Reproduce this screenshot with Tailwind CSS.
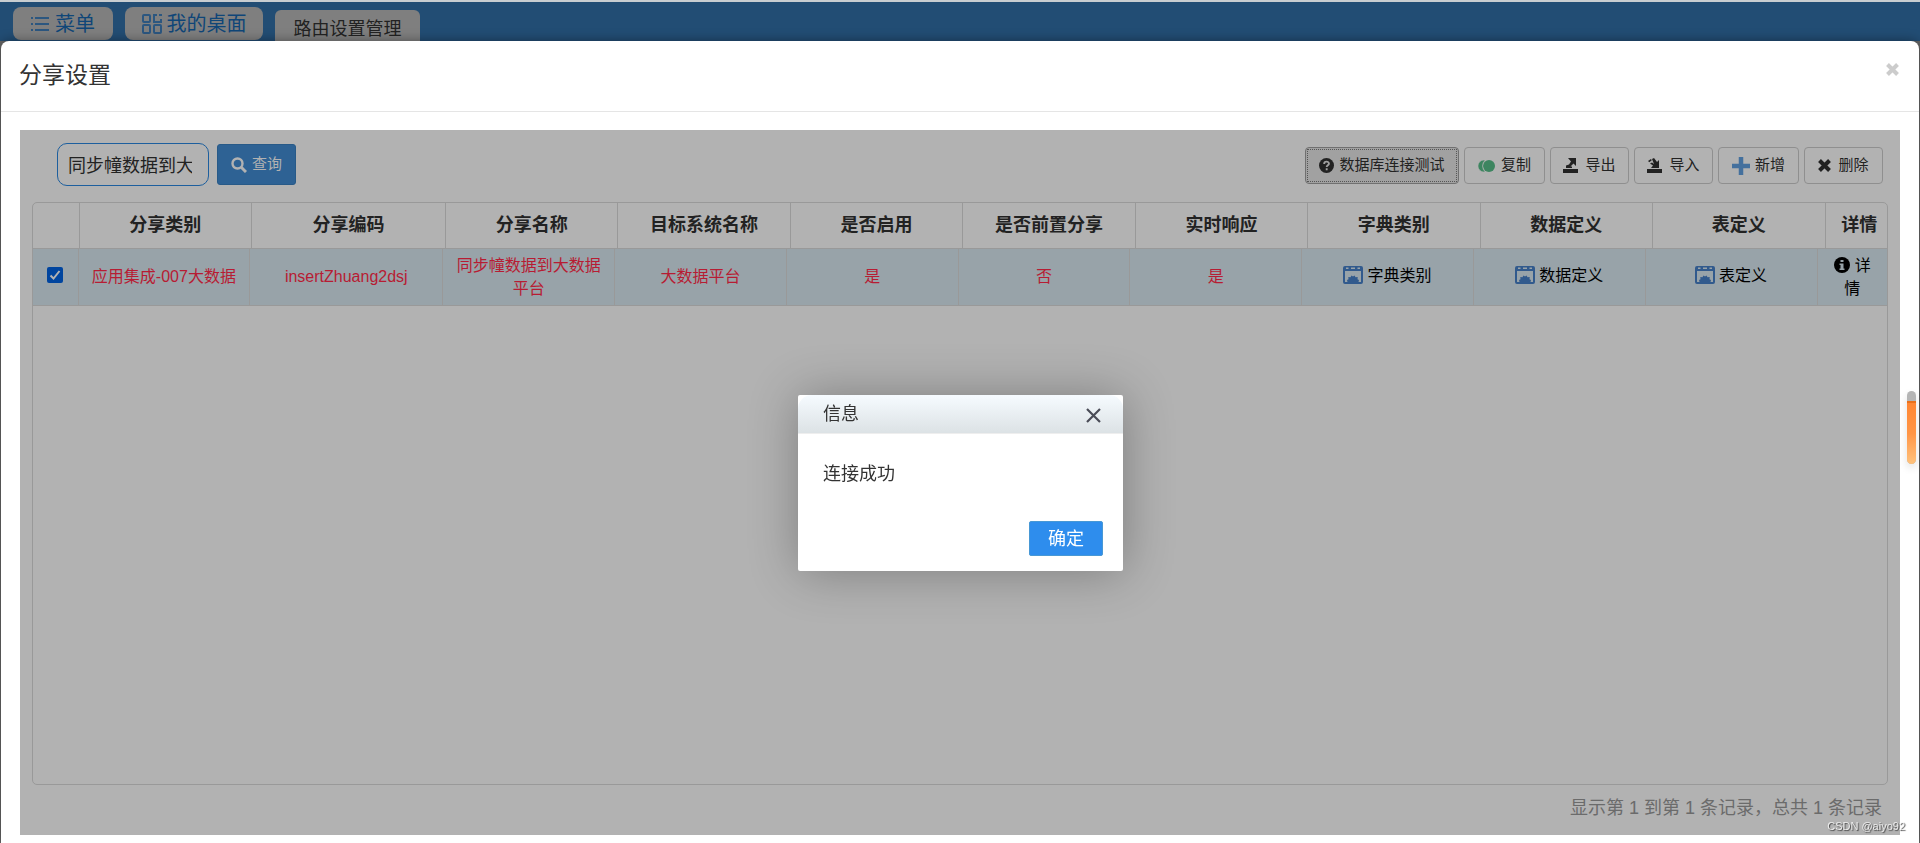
<!DOCTYPE html>
<html lang="zh-CN">
<head>
<meta charset="utf-8">
<title>分享设置</title>
<script src="https://cdn.jsdelivr.net/npm/@tailwindcss/browser@4"></script>
</head>
<body class="min-h-screen flex flex-col bg-[#666] font-['Liberation_Sans','Noto_Sans_CJK_SC',sans-serif] text-[18px] text-[#222]">
<svg class="hidden">
  <symbol id="win" viewBox="0 0 20 18"><path fill-rule="evenodd" d="M2 0h16a2 2 0 0 1 2 2v14a2 2 0 0 1-2 2H2a2 2 0 0 1-2-2V2a2 2 0 0 1 2-2zM2 5v11h2.500l-.5-2 1.500-.8-.2-2.200 2.200.2 1-1.700 1.500 1 1.500-1 1 1.700 2.200-.2-.2 2.200 1.500.8-.5 2H18V5zM3 1.500v1.500h2.500V1.500zM8 1.500v1.500h4V1.500zM14.500 1.500v1.500H17V1.500z"/></symbol>
</svg>

<nav class="h-[41px] border-t-2 border-[#c8cdd0] bg-[#224d74] flex items-start pl-[13px]">
  <button class="mt-[5px] h-[33px] w-[100px] rounded-lg bg-[#7f7f7f] text-[#0f4678] text-[20px] flex items-center justify-center gap-[6px]">
    <svg class="w-[18px] h-4" viewBox="0 0 18 16" fill="none" stroke="#2c5780" stroke-width="2"><path d="M4 2h14M4 8h14M4 14h14M0 2h2M0 8h2M0 14h2"/></svg>菜单</button>
  <button class="ml-3 mt-[5px] h-[33px] w-[138px] rounded-lg bg-[#7f7f7f] text-[#0f4678] text-[20px] flex items-center justify-center gap-[5px]">
    <svg class="w-5 h-5" viewBox="0 0 20 20" fill="none" stroke="#2c5780" stroke-width="2"><rect x="1" y="1" width="7" height="7" rx="1"/><path d="M15 1h-3v7h7V5M17 1h2v1"/><rect x="1" y="11" width="7" height="8" rx="1"/><rect x="12" y="11" width="7" height="8" rx="1"/></svg>我的桌面</button>
  <button class="ml-3 mt-2 h-[31px] w-[145px] rounded-t-md bg-[#7f7f7f] text-[#222] pt-[6px]">路由设置管理</button>
</nav>

<main class="flex-1 flex flex-col mx-px bg-white rounded-t-lg shadow-[0_0_12px_rgba(0,0,0,0.4)]">
  <header class="h-[71px] border-b border-[#e5e5e5] flex justify-between pl-[18px] pr-[20px]">
    <h1 class="mt-[18px] text-[23px] leading-8 text-[#333]">分享设置</h1>
    <button aria-label="关闭" class="mt-[22px] size-[13px] text-[#ccc]"><svg viewBox="0 0 13 13" stroke="currentColor" stroke-width="4"><path d="M1.500 1.500l10 10M11.500 1.500l-10 10"/></svg></button>
  </header>

  <section class="flex-1 flex flex-col mt-[18px] mx-[19px] mb-[8px] bg-[#b2b2b2] px-3">
    <div class="h-[72px] flex items-start justify-between">
      <form class="flex items-start gap-2 pl-[25px] pt-[13px]">
        <input aria-label="分享名称" value="同步幢数据到大数据平台" class="w-[152px] h-[43px] rounded-[10px] border border-[#1d5f9e] pl-[10px] pr-[16px] pb-[2px] bg-transparent text-[#222]">
        <button type="button" class="mt-px w-[79px] h-[41px] rounded-[3px] border border-[#285a88] bg-[#2e6294] text-[#b2b2b2] text-[15px] flex items-center justify-center gap-[5px]">
          <svg class="size-4" viewBox="0 0 16 16" fill="none" stroke="currentColor"><circle cx="6.500" cy="6.500" r="5" stroke-width="2.400"/><path d="M10.500 10.500l4.500 4.500" stroke-width="3"/></svg>查询</button>
      </form>
      <div class="flex gap-[5px] pt-[17px] pr-[5px] text-[15px]">
        <button class="w-[154px] h-[37px] rounded-[4px] border border-[#707070] bg-[#a1a1a1] p-px"><span class="flex h-full items-center justify-center gap-[5px] border border-dotted border-[#555]">
          <svg class="size-[15px]" viewBox="0 0 16 16"><circle cx="8" cy="8" r="8" fill="#222"/><path d="M5.500 6.300C5.500 3 10.600 3 10.600 6.200 10.600 7.700 8.200 8 8.200 9.600M8.200 11v2" fill="none" stroke="#a1a1a1" stroke-width="2"/></svg>数据库连接测试</span></button>
        <button class="w-[81px] h-[37px] rounded-[4px] border border-[#8f8f8f] flex items-center justify-center gap-[6px]">
          <svg class="w-[17px] h-3" viewBox="0 0 17 12" fill="#3d8560"><circle cx="11" cy="6" r="6"/><path d="M6 0a6 6 0 0 0 0 12l1-.2A8 8 0 0 1 7 .2z" stroke="#b2b2b2" stroke-width=".5"/></svg>复制</button>
        <button class="w-[79px] h-[37px] rounded-[4px] border border-[#8f8f8f] flex items-center justify-center gap-[7px]">
          <svg class="size-[15px]" viewBox="0 0 15 15" fill="#222"><path d="M0 11h15v4H0zM5 0h8v8l-2.500-2.500-3 3H9V10H3V7.500l3-1 2-3z"/></svg>导出</button>
        <button class="w-[79px] h-[37px] rounded-[4px] border border-[#8f8f8f] flex items-center justify-center gap-[7px]">
          <svg class="size-[15px]" viewBox="0 0 15 15" fill="#222"><path d="M0 11h15v4H0zM1 3l3-2 .8 1.200-2.500 2zM5 1l2-1 3 4 2-2v8H4l2-2.500-3-2L5 4.500 7 6z"/></svg>导入</button>
        <button class="w-[81px] h-[37px] rounded-[4px] border border-[#8f8f8f] flex items-center justify-center gap-[5px]">
          <svg class="size-[18px]" viewBox="0 0 18 18" stroke="#44709d" stroke-width="4.500"><path d="M9 0v18M0 9h18"/></svg>新增</button>
        <button class="w-[79px] h-[37px] rounded-[4px] border border-[#8f8f8f] flex items-center justify-center gap-[7px]">
          <svg class="size-[13px]" viewBox="0 0 13 13" stroke="#222" stroke-width="4"><path d="M1.500 1.500l10 10M11.500 1.500l-10 10"/></svg>删除</button>
      </div>
    </div>

    <div class="flex-1 rounded-[5px] border border-[#999] overflow-hidden">
      <table class="w-full table-fixed border-collapse">
        <colgroup><col class="w-[46px]"><col><col class="w-[194px]"><col><col><col><col><col><col><col><col><col class="w-[62px]"></colgroup>
        <thead><tr class="h-[45px] border-b border-[#999] *:border-l *:border-[#999] *:first:border-l-0 *:p-0 *:font-bold">
          <th></th><th>分享类别</th><th>分享编码</th><th>分享名称</th><th>目标系统名称</th><th>是否启用</th><th>是否前置分享</th><th>实时响应</th><th>字典类别</th><th>数据定义</th><th>表定义</th><th class="whitespace-nowrap"><span class="pl-[6px]">详情</span></th>
        </tr></thead>
      </table>
      <table class="w-full table-fixed border-collapse text-[16px] leading-[23px] text-center text-[#b71c33]">
        <colgroup><col class="w-[45px]"><col><col class="w-[193px]"><col><col><col><col><col><col><col><col><col class="w-[70px]"></colgroup>
        <tbody><tr class="h-[57px] border-b border-[#999] bg-[#98a3a9] *:border-l *:border-[#999] *:first:border-l-0 *:py-0 *:px-[10px]">
          <td><span class="mx-auto mb-1 grid size-4"><input type="checkbox" checked aria-label="选择" class="col-start-1 row-start-1 size-4 appearance-none rounded-[2px] bg-[#00459f]"><svg class="col-start-1 row-start-1 size-4 pointer-events-none" viewBox="0 0 16 16"><path d="M3.500 8.500l3 3 6-7.500" fill="none" stroke="#b2b2b2" stroke-width="2"/></svg></span></td>
          <td>应用集成-007大数据</td><td>insertZhuang2dsj</td><td>同步幢数据到大数据平台</td><td>大数据平台</td><td>是</td><td>否</td><td>是</td>
          <td><a href="#" class="text-black inline-flex items-center gap-1"><svg class="w-5 h-[18px]" fill="#315a8d"><use href="#win"/></svg>字典类别</a></td>
          <td><a href="#" class="text-black inline-flex items-center gap-1"><svg class="w-5 h-[18px]" fill="#315a8d"><use href="#win"/></svg>数据定义</a></td>
          <td><a href="#" class="text-black inline-flex items-center gap-1"><svg class="w-5 h-[18px]" fill="#315a8d"><use href="#win"/></svg>表定义</a></td>
          <td><a href="#" class="text-black"><svg class="inline size-4 mb-1 mr-[5px]" viewBox="0 0 16 16"><circle cx="8" cy="8" r="8"/><path d="M6.500 3h3v2h-3zM5.500 6.500h4v5h1V13h-5v-1.500h1V8h-1z" fill="#98a3a9"/></svg>详情</a></td>
        </tr></tbody>
      </table>
    </div>
    <p class="h-[50px] pt-[9px] pr-[6px] text-right leading-7 text-[#6b6b6b]">显示第 1 到第 1 条记录，总共 1 条记录</p>
  </section>
</main>

<div role="dialog" aria-labelledby="msg-title" class="fixed left-[798px] top-[395px] w-[325px] rounded-[2px] bg-white shadow-[1px_1px_50px_rgba(0,0,0,0.3)]">
  <div class="h-[39px] rounded-t-[14px] border-b border-[#eee] bg-linear-to-b from-[#f6fbff] to-[#dce2e5] flex items-center justify-between pl-[25px] pr-[22px]">
    <h2 id="msg-title" class="text-[#333]">信息</h2>
    <button aria-label="关闭" class="size-[15px] mt-[3px]"><svg viewBox="0 0 15 15" stroke="#4a4c57" stroke-width="2.200"><path d="M1 1l13 13M14 1L1 14"/></svg></button>
  </div>
  <p class="px-[25px] pt-[26px] leading-7 text-[#333]">连接成功</p>
  <div class="flex justify-end pt-[33px] pr-5 pb-[15px]"><button class="w-[74px] h-[35px] rounded-[2px] border border-[#4898d5] bg-[#2e8ded] text-white leading-8 pt-px">确定</button></div>
</div>

<div class="fixed right-[4px] top-[391px] w-[9px] h-[73px] rounded-full overflow-hidden bg-[#b5b5b5] pt-[10px] shadow-[0_4px_8px_rgba(0,0,0,0.12)]"><div class="h-full border-t-2 border-[#e8701c] bg-linear-to-b from-[#ff8632] via-[#ff9546] to-[#ffc27c]"></div></div>
<div class="fixed right-[15px] bottom-[9px] text-[11px] leading-4 text-white/80 [text-shadow:1px_1px_1px_#444]">CSDN @aiyo92</div>
</body>
</html>
